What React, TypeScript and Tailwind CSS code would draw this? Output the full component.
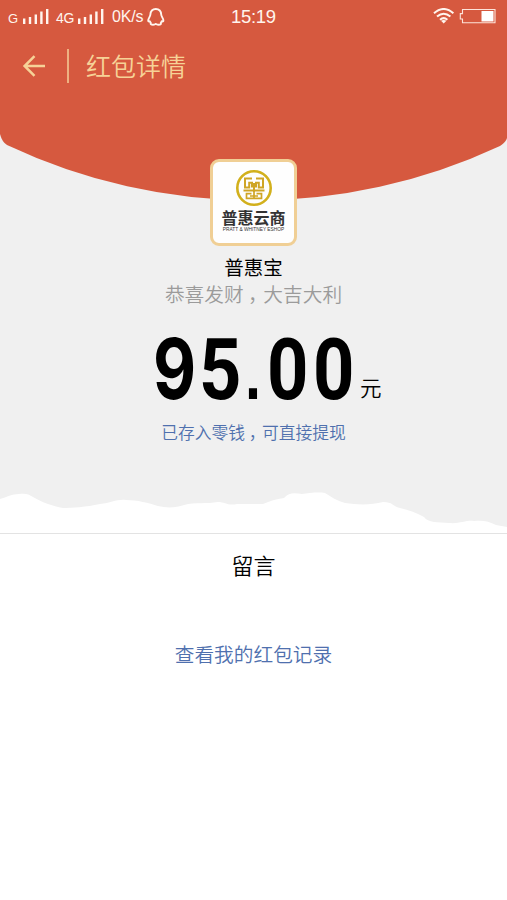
const SANS = 'font-["Liberation_Sans","Noto_Sans_CJK_SC",sans-serif]';

function SignalBars() {
  return (
    <svg width="27" height="16" viewBox="0 0 27 16" fill="#fff5ee" className="block">
      <rect x="0" y="10.5" width="2.4" height="5.5" />
      <rect x="5.8" y="9" width="2.4" height="7" />
      <rect x="11.6" y="6.5" width="2.4" height="9.5" />
      <rect x="17.2" y="3.5" width="2.4" height="12.5" />
      <rect x="23" y="1" width="2.4" height="15" />
    </svg>
  );
}

function StatusBar() {
  return (
    <div className="flex h-[33px] items-start text-[#fff5ee]">
      <div className="flex w-[231px] items-start pl-2">
        <span className="w-[14.5px] pt-[11px] text-[13px] leading-[15px]">G</span>
        <div className="w-[33.5px] pt-2">
          <SignalBars />
        </div>
        <span className="w-[22px] pt-[11px] text-[14px] leading-[15px] tracking-[-0.4px]">4G</span>
        <div className="w-[34px] pt-2">
          <SignalBars />
        </div>
        <span className="w-[34.5px] pt-[8px] text-[16px] leading-[18px] tracking-[-0.2px] whitespace-nowrap">0K/s</span>
        <svg width="18" height="18" viewBox="0 0 18 18" fill="none" stroke="#fff5ee" strokeWidth="1.9" strokeLinejoin="round" className="mt-2 block">
          <path d="M8.8 1C5.5 1 3.4 3.2 3.4 6.6C3.4 8.4 1.2 10.4 1.2 12.4C1.2 13.6 2 13.8 2.8 13.2C3.1 14 3.4 14.4 3.8 14.8C3.1 16.2 4.2 16.8 6 16.8C7.4 16.8 8 16.3 8.8 16C9.6 16.3 10.2 16.8 11.6 16.8C13.4 16.8 14.5 16.2 13.8 14.8C14.2 14.4 14.5 14 14.8 13.2C15.6 13.8 16.4 13.6 16.4 12.4C16.4 10.4 14.2 8.4 14.2 6.6C14.2 3.2 12.1 1 8.8 1Z" />
        </svg>
      </div>
      <span className="w-[202px] pt-[7px] text-[18.5px] leading-5 tracking-[-0.3px]">15:19</span>
      <svg width="22" height="16" viewBox="0 0 22 16" fill="none" stroke="#fff5ee" strokeWidth="2" className="mt-2 block">
        <path d="M1 5.3Q10.7 -3.3 20.4 5.3" />
        <path d="M4 8.6Q10.7 2.8 17.4 8.6" />
        <path d="M7 11.7Q10.7 8.6 14.4 11.7" />
        <path d="M8 12.8Q10.7 11 13.4 12.8L10.7 15.6Z" fill="#fff5ee" stroke="none" />
      </svg>
      <svg width="37" height="16" viewBox="0 0 37 16" className="ml-[4px] mt-2 block">
        <path d="M3.5 1.5H36V14.8H3.5V11H1.3V5.6H3.5Z" fill="none" stroke="#fde3d9" strokeWidth="1.1" />
        <rect x="22.5" y="3" width="12" height="10.5" fill="#fff" />
      </svg>
    </div>
  );
}

function TitleBar() {
  return (
    <div className="flex h-[66px] items-center text-[#f6d297]">
      <svg width="24" height="22" viewBox="0 0 24 22" fill="none" stroke="#f6d297" strokeWidth="2.5" className="ml-[22px] block">
        <path d="M12.5 1.2L2.6 11L12.5 20.8M2.6 11H23" />
      </svg>
      <div className="ml-[21px] h-[34px] w-[1.5px] bg-[#eeb181]" />
      <h1 className='mb-[3px] ml-[17.5px] font-["Noto_Sans_CJK_SC",sans-serif] text-[25px] leading-8 font-[350]'>红包详情</h1>
    </div>
  );
}

function Avatar() {
  return (
    <div className="flex h-[87px] w-[87px] flex-col items-center rounded-[9px] border-[3px] border-[#f0cf95] bg-[#fefefe]">
      <svg width="38" height="38" viewBox="0 0 38 38" fill="none" stroke="#d2b01c" className="mt-[7px] block shrink-0">
        <circle cx="19" cy="19" r="16.7" strokeWidth="2.6" />
        <g stroke="#cfa526" strokeWidth="2">
          <path d="M17 9.5H10V18.5H14.2V13.8H17V18.5M21 9.5H28V18.5H23.8V13.8H21V18.5M19 14V23M8.5 21.5H29.5" />
          <path d="M16.5 24.7H11.5V29.3H26.5V24.7H21.5M19 23V29M15 27H23" strokeWidth="1.7" />
        </g>
      </svg>
      <span className='mt-[1px] font-["Noto_Sans_CJK_SC",sans-serif] text-[16px] leading-[18px] font-bold whitespace-nowrap text-[#333]'>普惠云商</span>
      <span className="mt-[1px] text-[4.8px] leading-[6px] whitespace-nowrap text-[#333]">PRATT &amp; WHITNEY ESHOP</span>
    </div>
  );
}

/* Full-width comma with its mark in the middle of the cell. */
function Comma() {
  return <span className='inline-block w-[1em] pl-[0.22em] [font-feature-settings:"halt"]'>，</span>;
}

function Amount() {
  return (
    <div className="flex h-[72px] w-[207px] text-[86px] leading-[72px] font-bold whitespace-nowrap text-black">
      <span className="w-[46px]">
        <span className='inline-block origin-left scale-x-[0.79] font-["Inter",sans-serif] text-[84px]'>9</span>
      </span>
      <span className="w-[46px]">
        <span className='inline-block origin-left scale-x-[0.86] font-["Roboto",sans-serif]'>5</span>
      </span>
      <span className="w-[22px]">
        <span className='inline-block origin-left scale-x-[0.8] font-["Liberation_Sans",sans-serif] text-[72px]'>.</span>
      </span>
      <span className="w-[45.5px]">
        <span className='inline-block origin-left scale-x-[0.84] font-["Roboto",sans-serif]'>0</span>
      </span>
      <span className="w-[45px]">
        <span className='inline-block origin-left scale-x-[0.84] font-["Roboto",sans-serif]'>0</span>
      </span>
    </div>
  );
}

export default function App() {
  return (
    <main className={`flex h-[900px] w-[507px] flex-col overflow-hidden bg-white ${SANS}`}>
      <section className="relative isolate h-[533px] bg-[#f0f0f0]">
        <svg width="507" height="202" viewBox="0 0 507 202" className="absolute top-0 left-0 -z-10 block">
          <path d="M0 0H507V138Q506 142 500 146A580 580 0 0 1 7 145Q2 142 0 134Z" fill="#d6593f" />
        </svg>
        <svg width="507" height="50" viewBox="0 0 507 50" className="absolute bottom-0 left-0 -z-10 block">
          <path
            d="M0 16C7 14 12 11 19 11C25 10 29 11 33 14C41 19 53 23 63 25C72 25 86 24 100 21C111 20 117 16 126 17C137 17 149 20 158 23C166 25 176 25 184 22C195 19 207 21 218 19C225 19 228 23 237 21H263C270 18 276 16 284 15C289 9 295 10 302 11C309 10 318 9 325 10C330 13 337 18 345 20C358 22 372 22 383 19C393 19 392 23 400 25C409 27 417 30 424 34C428 40 438 39 449 40C460 41 466 37 474 38C482 37 489 38 496 42L507 44V50H0Z"
            fill="#fff"
          />
        </svg>
        <StatusBar />
        <TitleBar />
        <div className="flex flex-col items-center pt-[60px] font-[350]">
          <Avatar />
          <h2 className='mt-[7px] font-["Noto_Sans_CJK_SC",sans-serif] text-[19.5px] leading-[28px] font-normal text-black'>普惠宝</h2>
          <p className='-mt-px font-["Noto_Sans_CJK_SC",sans-serif] text-[19.7px] leading-[27px] text-[#9b9b9b]'>
            恭喜发财
            <Comma />
            大吉大利
          </p>
          <div className="mt-[26px] flex h-[72px] w-full items-end pl-[153px]">
            <Amount />
            <span className='mb-[3px] font-["Noto_Sans_CJK_SC",sans-serif] text-[21.5px] leading-[30px] text-black'>元</span>
          </div>
          <a className='mt-[15px] font-["Noto_Sans_CJK_SC",sans-serif] text-[16.8px] leading-[24px] text-[#4f70ae]'>
            已存入零钱
            <Comma />
            可直接提现
          </a>
        </div>
      </section>
      <section className='flex flex-col items-center border-t border-[#e3e3e3] font-["Noto_Sans_CJK_SC",sans-serif] font-[350]'>
        <h3 className="mt-[14px] text-[22px] leading-[32px] text-black">留言</h3>
        <a className="mt-[60px] text-[19.7px] leading-[28px] text-[#4f70ae]">查看我的红包记录</a>
      </section>
    </main>
  );
}
